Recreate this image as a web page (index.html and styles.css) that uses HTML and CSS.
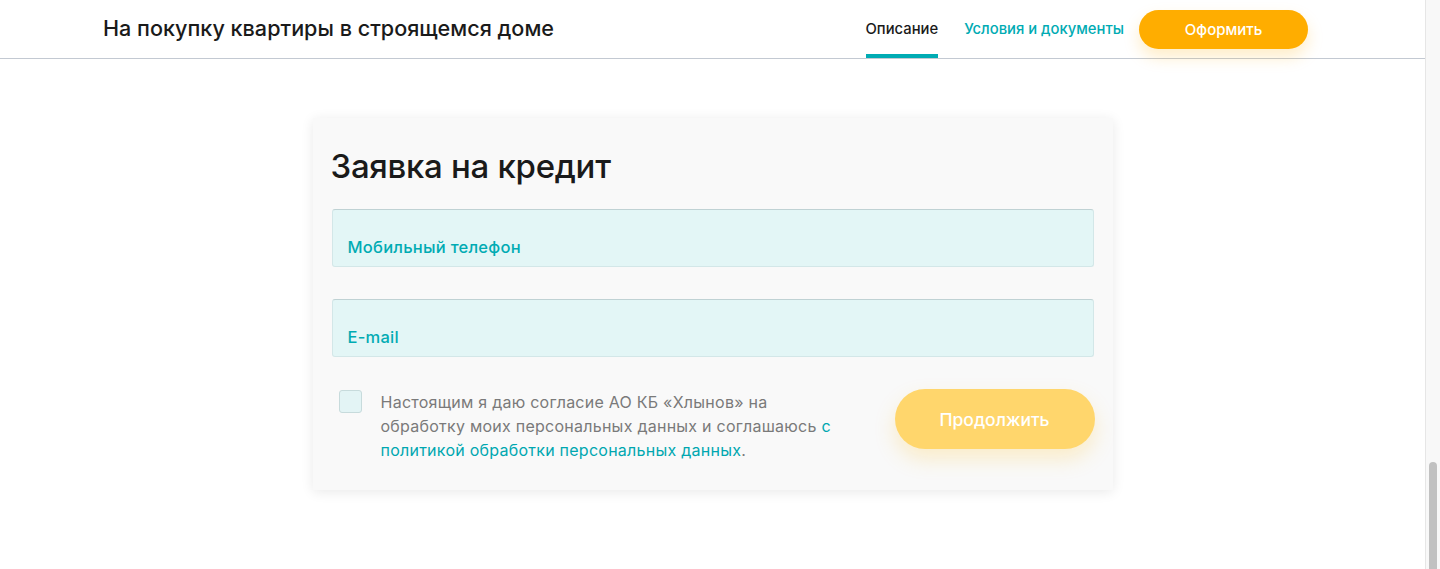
FILE: index.html
```html
<!DOCTYPE html>
<html lang="ru">
<head>
<meta charset="utf-8">
<title>Заявка на кредит</title>
<link rel="stylesheet" href="styles.css">
</head>
<body>
<div class="viewport">
  <div class="page">
    <header class="topbar">
      <div class="topbar-inner">
        <h1 class="product-title">На покупку квартиры в строящемся доме</h1>
        <nav class="tabs">
          <a class="tab tab-active" href="#">Описание</a>
          <a class="tab" href="#">Условия и документы</a>
          <button class="btn-order" type="button">Оформить</button>
        </nav>
      </div>
    </header>
    <main class="content">
      <section class="card">
        <h2 class="card-title">Заявка на кредит</h2>
        <div class="field"><span class="field-label">Мобильный телефон</span></div>
        <div class="field"><span class="field-label">E-mail</span></div>
        <div class="agree-row">
          <div class="agree">
            <span class="checkbox"></span>
            <p class="agree-text">Настоящим я даю согласие АО КБ «Хлынов» на обработку моих персональных данных и соглашаюсь <a href="#">с политикой обработки персональных данных</a>.</p>
          </div>
          <button class="btn-continue" type="button">Продолжить</button>
        </div>
      </section>
    </main>
  </div>
  <div class="scrollbar"><div class="scroll-space"></div><div class="scroll-thumb"></div></div>
</div>
</body>
</html>
```
FILE: styles.css
```css
* { box-sizing: border-box; }
html, body { margin: 0; padding: 0; }
body {
  font-family: Inter, "Noto Sans", Roboto, sans-serif;
  background: #fff;
  color: #1d1d1d;
  height: 569px;
  overflow: hidden;
}
.viewport { display: flex; height: 569px; }
.page { flex: 1; min-width: 0; }
.scrollbar {
  width: 15px;
  background: #f8f8f8;
  border-left: 1px solid #e6e6e6;
  display: flex;
  flex-direction: column;
  padding: 0 3px 0 3px;
}
.scroll-space { height: 462px; }
.scroll-thumb { flex: 1; background: #c1c1c1; border-radius: 4px 4px 0 0; }

.topbar { height: 59px; border-bottom: 1px solid #c3c9d2; }
.topbar-inner {
  margin-left: 103px;
  width: 1205px;
  height: 58px;
  display: flex;
  align-items: center;
  justify-content: space-between;
}
.product-title {
  margin: 0;
  font-size: 21.6px;
  font-weight: 500;
  color: #1a1a1a;
  letter-spacing: 0;
  padding-bottom: 2px;
}
.tabs { display: flex; align-items: stretch; height: 58px; }
.tab {
  display: flex;
  align-items: center;
  font-size: 14.8px;
  font-weight: 500;
  color: #00abb3;
  text-decoration: none;
  margin-right: 26px;
  border-bottom: 4px solid transparent;
  padding-top: 4px;
}
.tab-active { color: #1a1a1a; border-bottom-color: #00abb3; }
.btn-order {
  align-self: flex-start;
  margin-top: 10px;
  margin-left: -11px;
  width: 169px;
  height: 39px;
  border: 0;
  border-radius: 20px;
  background: #ffad00;
  color: #fff;
  font-family: inherit;
  font-size: 15px;
  font-weight: 500;
  box-shadow: 0 8px 16px rgba(255, 173, 0, 0.22);
}

.content { padding-top: 59px; display: flex; justify-content: center; }
.card {
  width: 800px;
  background: #f9f9f9;
  box-shadow: 0 2px 12px rgba(0, 0, 0, 0.09);
  padding: 28px 19px 28px 19px;
}
.card-title {
  margin: 0 0 23px -1px;
  font-size: 33px;
  font-weight: 500;
  color: #1a1a1a;
  letter-spacing: -0.3px;
  line-height: 40px;
}
.field {
  height: 58px;
  background: #e3f6f6;
  border: 1px solid #d3e7e8;
  border-top-color: #bfd2d4;
  border-radius: 3px;
  margin-bottom: 32px;
  padding: 27px 15px 0 15px;
}
.field-label {
  font-size: 16.5px;
  font-weight: 500;
  color: #00abb3;
  line-height: 20px;
  letter-spacing: 0.25px;
}
.agree-row {
  display: flex;
  justify-content: space-between;
  align-items: flex-start;
  margin-top: 32px;
  margin-right: -1px;
}
.agree { display: flex; align-items: flex-start; padding-left: 7px; }
.checkbox {
  width: 23px;
  height: 23px;
  flex: none;
  background: #e3f4f5;
  border: 1px solid #c7dbdc;
  border-radius: 3px;
  margin-top: 1px;
  margin-right: 19px;
}
.agree-text {
  margin: 0;
  width: 470px;
  font-size: 16px;
  line-height: 24px;
  color: #7a7a7a;
  letter-spacing: 0.25px;
  margin-top: 1px;
}
.agree-text a { color: #00a7b0; text-decoration: none; }
.btn-continue {
  width: 200px;
  height: 60px;
  border: 0;
  border-radius: 30px;
  background: #ffd66c;
  color: #fff;
  font-family: inherit;
  font-size: 17.5px;
  font-weight: 500;
  box-shadow: 0 10px 20px rgba(255, 200, 60, 0.25);
}
```
